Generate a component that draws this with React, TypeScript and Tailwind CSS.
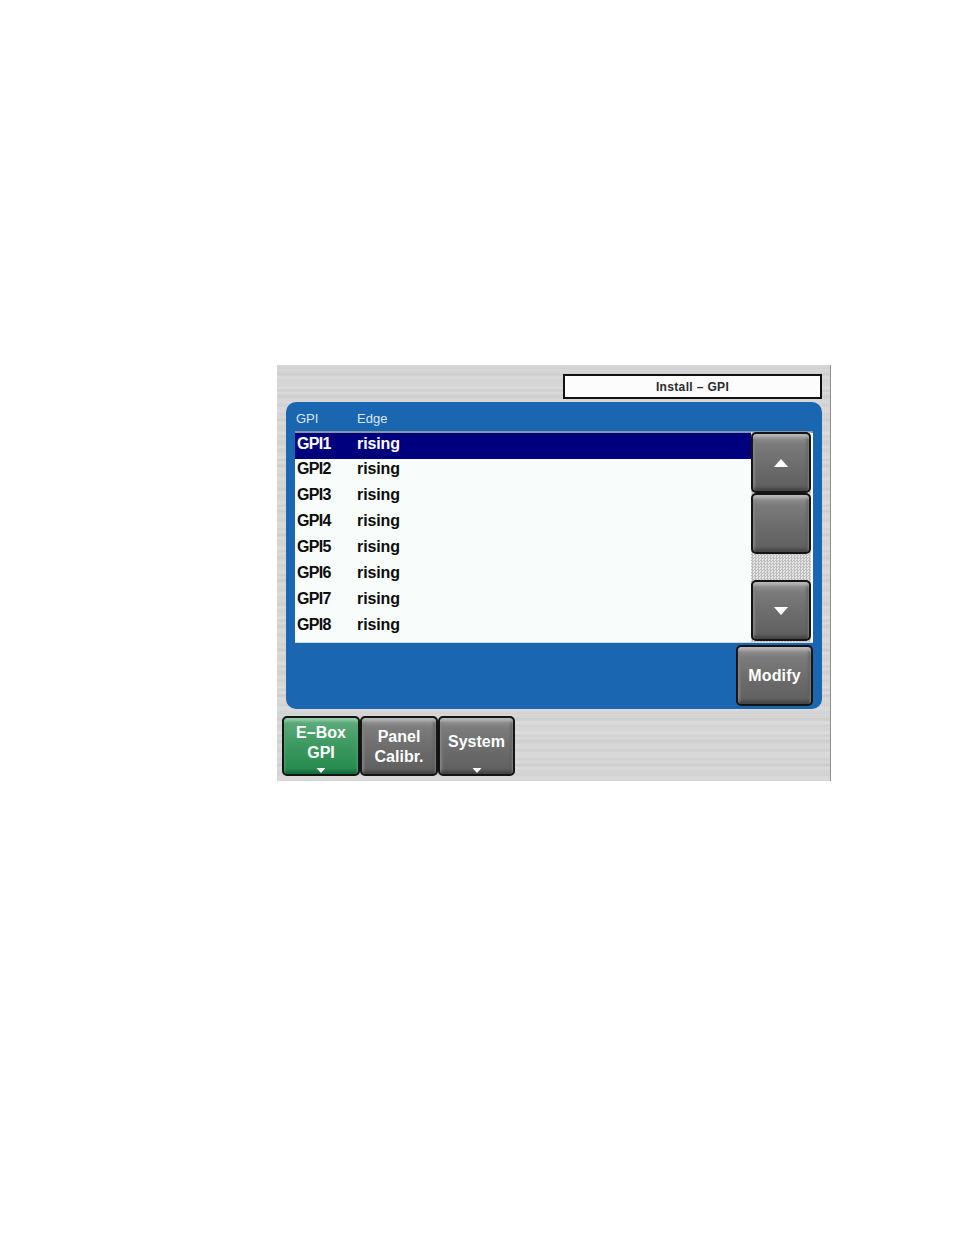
import { ReactNode } from "react";

const metal =
  "bg-[repeating-linear-gradient(180deg,rgba(255,255,255,0.14)_0px,rgba(120,120,120,0.06)_3px,rgba(255,255,255,0.1)_5px,rgba(120,120,120,0.09)_9px,rgba(255,255,255,0.12)_12px,rgba(130,130,130,0.04)_17px,rgba(255,255,255,0.14)_23px),repeating-linear-gradient(180deg,#d6d6d6_0px,#cfcfcf_1px,#dadada_2px,#d3d3d3_4px,#d8d8d8_5px)]";

const btn =
  "flex flex-col items-center justify-center rounded-[5px] border-2 border-[#141414] text-white font-bold font-['Liberation_Sans',sans-serif]";
const grey =
  "bg-[linear-gradient(180deg,#9a9a9a_0%,#7b7b7b_18%,#6c6c6c_55%,#5e5e5e_100%)] shadow-[inset_0_3px_3px_#b8b8b8,inset_0_-3px_3px_#454545,inset_2px_0_3px_#7f7f7f,inset_-2px_0_3px_#5a5a5a]";

const rows = ["GPI1", "GPI2", "GPI3", "GPI4", "GPI5", "GPI6", "GPI7", "GPI8"];

function Triangle({ up, className }: { up?: boolean; className: string }) {
  return (
    <svg viewBox="0 0 16 9" className={className}>
      <path d={up ? "M8 0 L16 9 L0 9 Z" : "M0 0 L16 0 L8 9 Z"} fill="#fff" />
    </svg>
  );
}

function ScrollButton({ children, h }: { children?: ReactNode; h: string }) {
  return <div className={`${btn} ${grey} ${h} w-[60px]`}>{children}</div>;
}

function Tab({
  lines,
  arrow,
  green,
  w,
  offset,
}: {
  lines: string[];
  arrow?: boolean;
  green?: boolean;
  w: string;
  offset: string;
}) {
  return (
    <div
      className={`${btn} ${
        green
          ? "bg-[linear-gradient(180deg,#62ad7c_0%,#3f9a62_45%,#22884a_100%)] shadow-[inset_0_3px_3px_#94cda9,inset_0_-3px_3px_#166a38]"
          : grey
      } relative h-[60px] ${w} text-[16px] leading-[20px] text-[#efefef]`}
    >
      <div className={offset}>
        {lines.map((l) => (
          <div key={l} className="text-center">
            {l}
          </div>
        ))}
      </div>
      {arrow && <Triangle className="absolute bottom-[1px] left-1/2 h-[5px] w-[10px] -translate-x-1/2" />}
    </div>
  );
}

export default function App() {
  return (
    <div className="min-h-[1235px] bg-white pt-[365px] pl-[277px]">
      <div className={`${metal} flex h-[416px] w-[554px] flex-col border-r border-[#8f8f8f]`}>
        <div className="flex justify-end pt-[9px] pr-[8px]">
          <div className="flex h-[25px] w-[259px] items-center justify-center border-2 border-[#111] bg-[#fbfcfb] font-['Liberation_Sans',sans-serif] text-[12px] font-bold tracking-[0.35px] text-[#2a2a2a]">
            Install – GPI
          </div>
        </div>

        <div className="mt-[3px] ml-[9px] flex h-[307px] w-[536px] flex-col rounded-[10px] bg-[#1b66b1] px-[9px]">
          <div className="flex h-[29px] items-end pb-[3px] font-['Liberation_Sans',sans-serif] text-[13px] text-[#d9e6f2]">
            <div className="w-[62px] pl-[1px]">GPI</div>
            <div>Edge</div>
          </div>

          <div className="flex h-[212px] w-[518px] border-t-2 border-[#8a97a3] bg-[#f8fcfb] pr-[2px] shadow-[inset_0_-1px_0_#cfd8de]">
            <div className="flex-1">
              {rows.map((r, i) => (
                <div
                  key={r}
                  className={`flex h-[26px] items-center font-['Liberation_Sans',sans-serif] text-[16px] font-bold ${
                    i === 0 ? "bg-[#00007f] pb-[4px] text-white" : "pb-[6px] text-[#0c0c0c]"
                  }`}
                >
                  <div className="w-[62px] pl-[2px] tracking-[-0.7px]">{r}</div>
                  <div className="tracking-[-0.1px]">rising</div>
                </div>
              ))}
            </div>
            <div className="-mt-[1px] flex h-[210px] w-[60px] flex-col bg-[repeating-conic-gradient(#bdbdbd_0%_25%,#e6e6e6_0%_50%)] bg-[length:3px_3px]">
              <ScrollButton h="h-[61px]">
                <Triangle up className="h-[8px] w-[16px]" />
              </ScrollButton>
              <ScrollButton h="h-[61px]" />
              <div className="h-[26px]" />
              <ScrollButton h="h-[61px]">
                <Triangle className="h-[8px] w-[16px]" />
              </ScrollButton>
            </div>
          </div>

          <div className="flex justify-end pt-[2px]">
            <div className={`${btn} ${grey} h-[61px] w-[77px] text-[16px] tracking-[0.2px] text-[#f0f0f0]`}>Modify</div>
          </div>
        </div>

        <div className="mt-[7px] flex pl-[5px]">
          <Tab lines={["E–Box", "GPI"]} arrow green w="w-[78px]" offset="-mt-[7px]" />
          <Tab lines={["Panel", "Calibr."]} w="w-[78px]" offset="mt-[2px]" />
          <Tab lines={["System"]} arrow w="w-[77px]" offset="-mt-[9px]" />
        </div>
      </div>
    </div>
  );
}
